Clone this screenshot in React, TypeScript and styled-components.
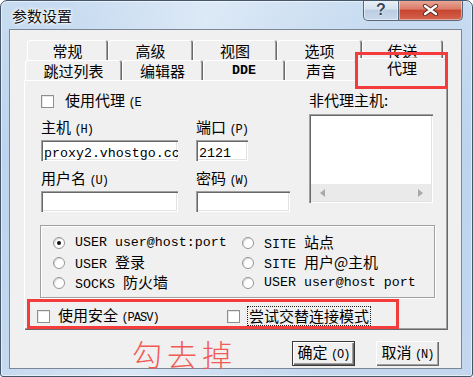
import React from 'react';
import styled, { createGlobalStyle } from 'styled-components';

const GlobalStyle = createGlobalStyle`
  html, body { margin: 0; padding: 0; background: #fff; }
  body { font-family: "Noto Sans CJK SC", "Noto Sans", sans-serif; font-size: 15px; line-height: 18px; color: #000; }
  * { box-sizing: border-box; }
`;

const Window = styled.div`
  position: relative; width: 473px; height: 377px; display: flex; flex-direction: column; overflow: hidden;
  border: 1px solid #46566a; border-radius: 7px 7px 3px 3px;
  background:
    linear-gradient(102deg, rgba(255,255,255,0) 12%, rgba(255,255,255,0.38) 38%, rgba(255,255,255,0.12) 58%, rgba(255,255,255,0) 72%),
    linear-gradient(180deg, #c8dcf1 0%, #bcd4ed 40%, #c3d8ef 100%);
  box-shadow: inset 0 0 0 1px rgba(255,255,255,0.55);
`;

const TitleBar = styled.div`
  height: 31px; display: flex; align-items: flex-start; padding-left: 11px;
`;

const Title = styled.div`
  margin-top: 6px; font-size: 15px; color: #111;
  text-shadow: 0 0 5px #fff, 0 0 3px #fff, 0 0 2px #fff;
`;

const CaptionButtons = styled.div`
  margin-left: auto; margin-right: 9px; margin-top: -1px; display: flex; height: 21px;
`;

const CaptionButton = styled.div<{ $close?: boolean }>`
  width: ${p => (p.$close ? 64 : 36)}px; height: 21px; display: flex; align-items: center; justify-content: center;
  border: 1px solid #59687a; border-top: none;
  border-left: ${p => (p.$close ? 'none' : '1px solid #59687a')};
  border-radius: ${p => (p.$close ? '0 0 5px 0' : '0 0 0 5px')};
  background: ${p => p.$close
    ? 'linear-gradient(180deg, #e9aa9a 0%, #dc7b68 45%, #c84531 52%, #d4634b 100%)'
    : 'linear-gradient(180deg, #eaf0f7 0%, #d5e1ee 45%, #bccde2 52%, #c9d9eb 100%)'};
  box-shadow: inset 0 0 0 1px rgba(255,255,255,0.45);
  color: #34465a; font-weight: bold; font-size: 16px; font-family: "Liberation Sans", sans-serif;
  text-shadow: 0 0 2px #fff, 0 0 1px #fff;
`;

const Client = styled.div`
  flex: 1; margin: 0 10px 7px 8px; background: #f0f0f0; border: 1px solid #7b8796;
  display: flex; flex-direction: column; padding: 10px 13px 0 14px;
`;

const TabStrip = styled.div`
  display: flex; flex-direction: column; position: relative; z-index: 2;
`;

const TabRow = styled.div<{ $indent: number; $front?: boolean }>`
  display: flex; align-items: flex-end; height: 20px; padding-left: ${p => p.$indent}px;
  position: relative; z-index: ${p => (p.$front ? 2 : 1)};
`;

const Tab = styled.div<{ $w: number; $active?: boolean }>`
  width: ${p => p.$w}px; height: ${p => (p.$active ? 23 : 20)}px;
  margin-bottom: ${p => (p.$active ? -1 : 0)}px; padding: ${p => (p.$active ? '0 0 3px 0' : '1px 0 0 0')};
  display: flex; align-items: center; justify-content: center; flex-shrink: 0;
  background: #f0f0f0; border-radius: 3px 3px 0 0; position: relative; z-index: ${p => (p.$active ? 3 : 1)};
  box-shadow: inset 1px 1px #fff, inset -1px 0 #696969, inset -2px 0 #a0a0a0;
`;

const Panel = styled.div`
  background: #f0f0f0; padding: 12px 0 5px 17px;
  box-shadow: inset 1px 1px #fff, inset -1px -1px #696969, inset -2px -2px #a0a0a0;
`;

const TopArea = styled.div`
  display: flex;
`;

const LeftCol = styled.div`
  width: 268px;
`;

const CheckRow = styled.label`
  display: flex; align-items: center; height: 18px; gap: 11px;
`;

const Check = styled.span`
  width: 13px; height: 13px; flex-shrink: 0; background: #fff;
  border: 1px solid #8e8f8f; box-shadow: inset 1px 1px #e6e6e6;
`;

const Fields = styled.div`
  display: grid; grid-template-columns: 155px auto; row-gap: 8px; margin-top: 8px;
`;

const Field = styled.div`
  display: flex; flex-direction: column; align-items: flex-start;
`;

const Label = styled.div`
  line-height: 18px; margin-bottom: 1px; white-space: nowrap;
`;

const Lat = styled.span<{ $bold?: boolean }>`
  font-family: "Liberation Mono", monospace; font-size: 13.3px;
  font-weight: ${p => (p.$bold ? 'bold' : 'normal')};
`;

const Mn = styled.span`
  font-family: "Liberation Mono", monospace; font-size: 12px; letter-spacing: -1px;
`;

const TextBox = styled.div<{ $w: number }>`
  width: ${p => p.$w}px; height: 21px; background: #fff; overflow: hidden; white-space: nowrap;
  padding: 2px 0 0 3px; line-height: 18px;
  box-shadow: inset 1px 1px #a0a0a0, inset 2px 2px #696969, inset -1px -1px #fff, inset -2px -2px #e3e3e3;
`;

const RightCol = styled.div`
  display: flex; flex-direction: column; margin-top: -1px;
`;

const ListBox = styled.div`
  width: 124px; height: 89px; margin-top: 4px; background: #fff; padding: 2px;
  display: flex; flex-direction: column; justify-content: flex-end;
  box-shadow: inset 1px 1px #a0a0a0, inset 2px 2px #696969, inset -1px -1px #fff, inset -2px -2px #e3e3e3;
`;

const HScroll = styled.div`
  height: 17px; background: #eaeaea; display: flex; align-items: center; justify-content: space-between;
  padding: 0 8px 0 9px;
`;

const Arrow = styled.span<{ $dir: 'left' | 'right' }>`
  width: 0; height: 0; border-top: 4px solid transparent; border-bottom: 4px solid transparent;
  ${p => (p.$dir === 'left' ? 'border-right: 5px solid #a9a9a9;' : 'border-left: 5px solid #a9a9a9;')}
`;

const GroupBox = styled.div`
  margin: 13px 0 0 -1px; width: 395px; height: 73px; padding: 7px 0 0 12px;
  border: 1px solid #a0a0a0; box-shadow: inset 1px 1px #fff, 1px 1px #fff;
  display: grid; grid-template-columns: 189px auto; grid-template-rows: repeat(3, 20px); grid-auto-flow: column;
`;

const RadioItem = styled.label`
  display: flex; align-items: center; gap: 10px; white-space: nowrap;
`;

const Radio = styled.span<{ $on?: boolean }>`
  width: 12px; height: 12px; border-radius: 50%; flex-shrink: 0; background: #fff;
  border: 1px solid #959595; box-shadow: inset 1px 1px #dadada;
  display: flex; align-items: center; justify-content: center;
  &::after { content: ''; width: 4px; height: 4px; border-radius: 50%; background: ${p => (p.$on ? '#111' : 'transparent')}; }
`;

const BottomRow = styled.div`
  display: flex; height: 18px; margin: 9px 0 0 -4px;
`;

const OptionCheck = styled.label<{ $w?: number }>`
  display: flex; align-items: center; gap: 8px; white-space: nowrap;
  width: ${p => (p.$w ? `${p.$w}px` : 'auto')};
`;

const Focus = styled.span`
  outline: 1px dotted #222; outline-offset: 0; padding: 0 1px;
`;

const Footer = styled.div`
  display: flex; align-items: center; margin-top: 8px; padding: 0 9px 0 108px;
`;

const Hint = styled.div`
  font-size: 30px; line-height: 30px; letter-spacing: 5px; color: #f25a55; font-weight: 300;
`;

const Buttons = styled.div`
  margin-left: auto; display: flex; gap: 21px;
`;

const Button = styled.div<{ $default?: boolean }>`
  width: 63px; height: 25px; display: flex; align-items: center; justify-content: center; background: #f0f0f0;
  border: ${p => (p.$default ? '1px solid #3a3a3a' : 'none')}; white-space: nowrap;
  box-shadow: inset 1px 1px #fff, inset -1px -1px #696969, inset -2px -2px #a0a0a0;
`;

const Annotation = styled.div<{ $x: number; $y: number; $w: number; $h: number }>`
  position: absolute; left: ${p => p.$x}px; top: ${p => p.$y}px; width: ${p => p.$w}px; height: ${p => p.$h}px;
  border: 3px solid #f43c3c; pointer-events: none; z-index: 10;
`;

const CloseIcon = () => (
  <svg width="17" height="12" viewBox="0 0 17 12">
    <path d="M3 2 L14 10 M14 2 L3 10" stroke="#5a2a22" strokeWidth="4.2" strokeLinecap="round" />
    <path d="M3 2 L14 10 M14 2 L3 10" stroke="#fff" strokeWidth="2.4" strokeLinecap="round" />
  </svg>
);

const backTabs = [
  { label: '常规', w: 81 },
  { label: '高级', w: 85 },
  { label: '视图', w: 84 },
  { label: '选项', w: 85 },
  { label: '传送', w: 81 },
];

const frontTabs: { label: React.ReactNode; w: number; active?: boolean }[] = [
  { label: '跳过列表', w: 97 },
  { label: '编辑器', w: 81 },
  { label: <Lat $bold>DDE</Lat>, w: 82 },
  { label: '声音', w: 72 },
  { label: '代理', w: 90, active: true },
];

const radios: { label: React.ReactNode; on?: boolean }[] = [
  { label: <Lat>USER user@host:port</Lat>, on: true },
  { label: <span><Lat>USER </Lat>登录</span> },
  { label: <span><Lat>SOCKS </Lat>防火墙</span> },
  { label: <span><Lat>SITE </Lat>站点</span> },
  { label: <span><Lat>SITE </Lat>用户@主机</span> },
  { label: <Lat>USER user@host port</Lat> },
];

export default function App() {
  return (
    <>
      <GlobalStyle />
      <Window>
        <TitleBar>
          <Title>参数设置</Title>
          <CaptionButtons>
            <CaptionButton>?</CaptionButton>
            <CaptionButton $close><CloseIcon /></CaptionButton>
          </CaptionButtons>
        </TitleBar>
        <Client>
          <TabStrip>
            <TabRow $indent={3}>
              {backTabs.map(t => <Tab key={t.label} $w={t.w}>{t.label}</Tab>)}
            </TabRow>
            <TabRow $indent={1} $front>
              {frontTabs.map((t, i) => <Tab key={i} $w={t.w} $active={t.active}>{t.label}</Tab>)}
            </TabRow>
          </TabStrip>
          <Panel>
            <TopArea>
              <LeftCol>
                <CheckRow><Check /><span>使用代理 <Mn>(E</Mn></span></CheckRow>
                <Fields>
                  <Field>
                    <Label>主机 <Mn>(H)</Mn></Label>
                    <TextBox $w={137}><Lat>proxy2.vhostgo.cc</Lat></TextBox>
                  </Field>
                  <Field>
                    <Label>端口 <Mn>(P)</Mn></Label>
                    <TextBox $w={52}><Lat>2121</Lat></TextBox>
                  </Field>
                  <Field>
                    <Label>用户名 <Mn>(U)</Mn></Label>
                    <TextBox $w={137} />
                  </Field>
                  <Field>
                    <Label>密码 <Mn>(W)</Mn></Label>
                    <TextBox $w={94} />
                  </Field>
                </Fields>
              </LeftCol>
              <RightCol>
                <Label>非代理主机:</Label>
                <ListBox>
                  <HScroll><Arrow $dir="left" /><Arrow $dir="right" /></HScroll>
                </ListBox>
              </RightCol>
            </TopArea>
            <GroupBox>
              {radios.map((r, i) => (
                <RadioItem key={i}><Radio $on={r.on} />{r.label}</RadioItem>
              ))}
            </GroupBox>
            <BottomRow>
              <OptionCheck $w={190}><Check /><span>使用安全 <Mn>(PASV)</Mn></span></OptionCheck>
              <OptionCheck><Check /><Focus>尝试交替连接模式</Focus></OptionCheck>
            </BottomRow>
          </Panel>
          <Footer>
            <Hint>勾去掉</Hint>
            <Buttons>
              <Button $default><span>确定 <Mn>(O)</Mn></span></Button>
              <Button><span>取消 <Mn>(N)</Mn></span></Button>
            </Buttons>
          </Footer>
        </Client>
        <Annotation $x={354} $y={51} $w={93} $h={37} />
        <Annotation $x={26} $y={298} $w={372} $h={30} />
      </Window>
    </>
  );
}
